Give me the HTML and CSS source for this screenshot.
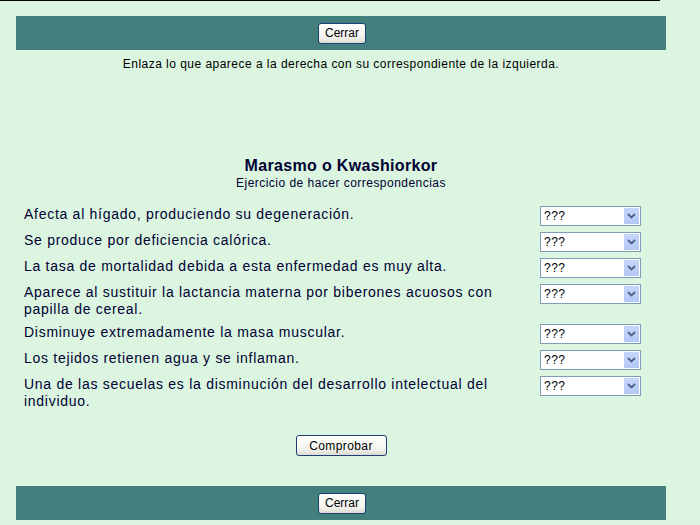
FILE: index.html
```html
<!DOCTYPE html>
<html lang="es">
<head>
<meta charset="utf-8">
<title>Marasmo o Kwashiorkor</title>
<link rel="stylesheet" href="styles.css">
</head>
<body>
<div class="topline"></div>
<div class="page">
  <div class="bar"><button class="btn">Cerrar</button></div>
  <p class="intro">Enlaza lo que aparece a la derecha con su correspondiente de la izquierda.</p>
  <h1 class="title">Marasmo o Kwashiorkor</h1>
  <p class="subtitle">Ejercicio de hacer correspondencias</p>
  <div class="rows">
    <div class="q">Afecta al hígado, produciendo su degeneración.</div>
    <div class="sel"><select><option>???</option></select><span class="arrow"><svg width="9" height="6" viewBox="0 0 9 6"><path d="M1 1l3.5 3.5L8 1" fill="none" stroke="#4d6185" stroke-width="1.8"/></svg></span></div>
    <div class="q">Se produce por deficiencia calórica.</div>
    <div class="sel"><select><option>???</option></select><span class="arrow"><svg width="9" height="6" viewBox="0 0 9 6"><path d="M1 1l3.5 3.5L8 1" fill="none" stroke="#4d6185" stroke-width="1.8"/></svg></span></div>
    <div class="q">La tasa de mortalidad debida a esta enfermedad es muy alta.</div>
    <div class="sel"><select><option>???</option></select><span class="arrow"><svg width="9" height="6" viewBox="0 0 9 6"><path d="M1 1l3.5 3.5L8 1" fill="none" stroke="#4d6185" stroke-width="1.8"/></svg></span></div>
    <div class="q">Aparece al sustituir la lactancia materna por biberones acuosos con papilla de cereal.</div>
    <div class="sel"><select><option>???</option></select><span class="arrow"><svg width="9" height="6" viewBox="0 0 9 6"><path d="M1 1l3.5 3.5L8 1" fill="none" stroke="#4d6185" stroke-width="1.8"/></svg></span></div>
    <div class="q">Disminuye extremadamente la masa muscular.</div>
    <div class="sel"><select><option>???</option></select><span class="arrow"><svg width="9" height="6" viewBox="0 0 9 6"><path d="M1 1l3.5 3.5L8 1" fill="none" stroke="#4d6185" stroke-width="1.8"/></svg></span></div>
    <div class="q">Los tejidos retienen agua y se inflaman.</div>
    <div class="sel"><select><option>???</option></select><span class="arrow"><svg width="9" height="6" viewBox="0 0 9 6"><path d="M1 1l3.5 3.5L8 1" fill="none" stroke="#4d6185" stroke-width="1.8"/></svg></span></div>
    <div class="q">Una de las secuelas es la disminución del desarrollo intelectual del individuo.</div>
    <div class="sel"><select><option>???</option></select><span class="arrow"><svg width="9" height="6" viewBox="0 0 9 6"><path d="M1 1l3.5 3.5L8 1" fill="none" stroke="#4d6185" stroke-width="1.8"/></svg></span></div>
  </div>
  <div class="check"><button class="btn wide">Comprobar</button></div>
  <div class="bar bottom"><button class="btn">Cerrar</button></div>
</div>
</body>
</html>
```
FILE: styles.css
```css
* { box-sizing: border-box; }
html, body { margin: 0; padding: 0; }
body {
  background: #dcf5e1;
  font-family: "Liberation Sans", Arial, sans-serif;
  color: #000033;
  width: 700px;
  height: 525px;
  overflow: hidden;
}
.topline {
  width: 660px;
  height: 1px;
  background: #000;
}
.page {
  width: 650px;
  margin: 15px 0 0 16px;
}
.bar {
  background: #437f7c;
  height: 34px;
  display: flex;
  align-items: center;
  justify-content: center;
}
.btn {
  font-family: "Liberation Sans", Arial, sans-serif;
  font-size: 12px;
  color: #000;
  height: 21px;
  padding: 0 4px;
  border: 1px solid #1c3f75;
  border-radius: 3px;
  background: linear-gradient(#ffffff, #f3f3ee 70%, #dcdad2);
}
.bar .btn { width: 48px; margin-left: 2px; }
.wide { width: 91px; letter-spacing: 0.4px; }
.intro {
  margin: 7px 0 0;
  font-size: 12px;
  line-height: 14px;
  letter-spacing: 0.47px;
  text-align: center;
  color: #000;
}
.title {
  margin: 86px 0 0;
  font-size: 16px;
  line-height: 18px;
  letter-spacing: 0.33px;
  font-weight: bold;
  text-align: center;
}
.subtitle {
  margin: 1px 0 0;
  font-size: 12px;
  line-height: 14px;
  letter-spacing: 0.47px;
  text-align: center;
}
.rows {
  margin: 13px 0 0 8px;
  width: 617px;
  display: grid;
  grid-template-columns: 1fr 101px;
  column-gap: 6px;
}
.q {
  font-size: 14px;
  line-height: 17px;
  letter-spacing: 0.72px;
  padding: 3px 0;
  min-height: 26px;
}
.sel {
  position: relative;
  height: 20px;
  margin: 3px 0;
}
.sel select {
  appearance: none;
  -webkit-appearance: none;
  width: 101px;
  height: 20px;
  border: 1px solid #7f9db9;
  background: #fff;
  font-family: "Liberation Sans", Arial, sans-serif;
  font-size: 12px;
  letter-spacing: 0.5px;
  color: #000;
  padding: 0 0 0 3px;
  margin: 0;
  border-radius: 0;
}
.arrow {
  position: absolute;
  right: 2px;
  top: 2px;
  width: 15px;
  height: 16px;
  background: linear-gradient(#c6d6fb, #b2c8f5);
  display: flex;
  align-items: center;
  justify-content: center;
  pointer-events: none;
}
.check {
  display: flex;
  justify-content: center;
  margin-top: 22px;
}
.bottom { margin-top: 30px; }
```
